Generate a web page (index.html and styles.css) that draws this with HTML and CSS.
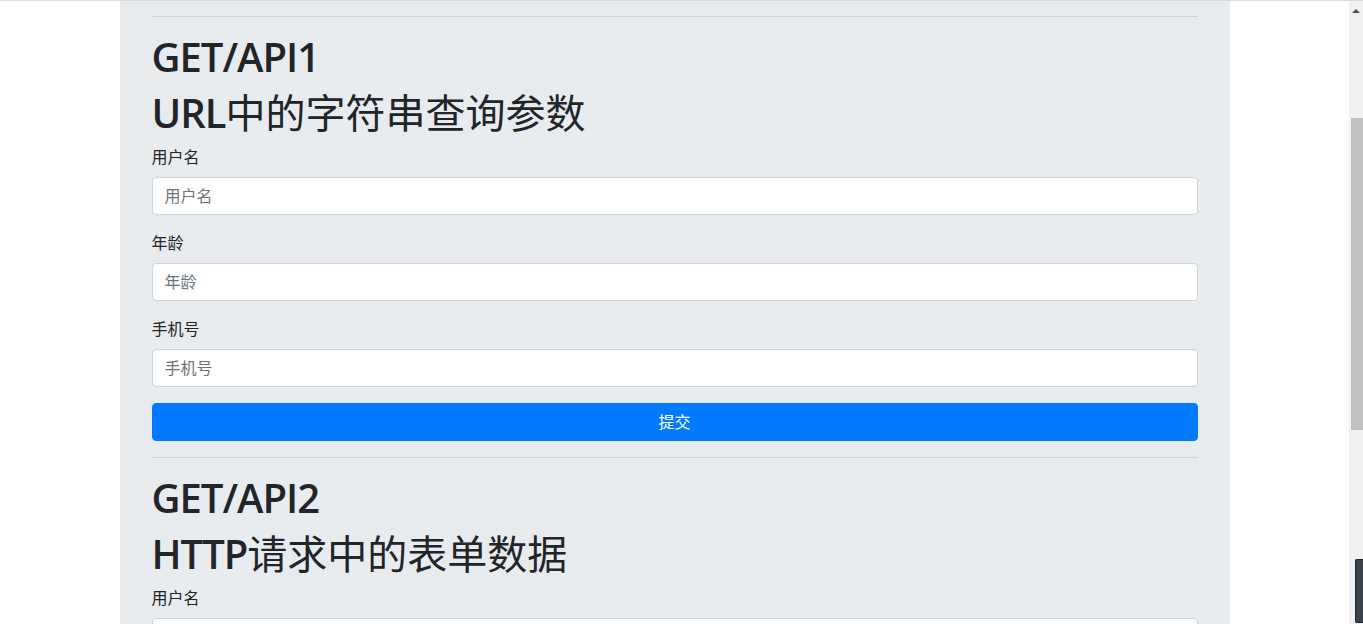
FILE: index.html
```html
<!DOCTYPE html>
<html>
<head>
    <meta charset="utf-8">
    <title>API 测试</title>
    <link rel="stylesheet" href="styles.css">
</head>
<body>
    <div class="page">
        <div class="jumbotron">
            <hr>
            <h1>GET/API1</h1>
            <h1>URL<span class="cn">中的字符串查询参数</span></h1>
            <form>
                <div class="form-group">
                    <label for="name1">用户名</label>
                    <input type="text" id="name1" class="form-control" placeholder="用户名">
                </div>
                <div class="form-group">
                    <label for="age1">年龄</label>
                    <input type="text" id="age1" class="form-control" placeholder="年龄">
                </div>
                <div class="form-group">
                    <label for="phone1">手机号</label>
                    <input type="text" id="phone1" class="form-control" placeholder="手机号">
                </div>
                <button type="button" class="btn">提交</button>
            </form>
            <hr>
            <h1>GET/API2</h1>
            <h1>HTTP<span class="cn">请求中的表单数据</span></h1>
            <form>
                <div class="form-group">
                    <label for="name2">用户名</label>
                    <input type="text" id="name2" class="form-control" placeholder="用户名">
                </div>
            </form>
        </div>
    </div>
    <div class="scrollbar">
        <div class="arrow"></div>
        <div class="thumb"></div>
        <div class="meter"></div>
    </div>
</body>
</html>
```

FILE: styles.css
```css
html, body {
    height: 100%;
}
body {
    margin: 0;
    display: flex;
    overflow: hidden;
    border-top: 1px solid #dadada;
    box-sizing: border-box;
    font-family: "Open Sans", "Noto Sans CJK SC", sans-serif;
    font-size: 16px;
    line-height: 1.5;
    color: #212529;
    background: #fff;
}
.page {
    flex: 1;
    min-width: 0;
}
.jumbotron {
    width: 1046px;
    margin: 0 auto;
    padding: 15px 32px 0;
    background-color: #e9ecef;
    min-height: 700px;
}
hr {
    margin: 0 0 16px;
    border: 0;
    border-top: 1px solid rgba(0, 0, 0, .1);
    height: 0;
}
form + hr {
    margin-top: 16px;
}
h1 {
    font-size: 40px;
    font-weight: 600;
    line-height: 48px;
    margin: 0 0 8px;
    letter-spacing: -1px;
}
h1 .cn {
    font-weight: 400;
    letter-spacing: 0;
}
.form-group {
    margin-bottom: 16px;
}
label {
    display: inline-block;
    margin-bottom: 8px;
    font-size: 16px;
    line-height: 24px;
}
.form-control {
    display: block;
    width: 100%;
    height: 38px;
    box-sizing: border-box;
    padding: 6px 12px;
    font-family: inherit;
    font-size: 16px;
    color: #495057;
    background: #fff;
    border: 1px solid #ced4da;
    border-radius: 4px;
    outline: none;
}
.form-control::placeholder {
    color: #6c757d;
}
.btn {
    display: block;
    width: 100%;
    height: 38px;
    padding: 6px 12px;
    font-family: inherit;
    font-size: 16px;
    line-height: 24px;
    color: #fff;
    background-color: #007bff;
    border: 1px solid #007bff;
    border-radius: 4px;
}
.scrollbar {
    width: 14px;
    background: #f1f1f1;
    display: flex;
    flex-direction: column;
    align-items: flex-end;
    position: relative;
}
.arrow {
    margin: 8px 3px 0 0;
    width: 0;
    height: 0;
    border-left: 4px solid transparent;
    border-right: 4px solid transparent;
    border-bottom: 4px solid #505050;
}
.thumb {
    margin-top: 105px;
    width: 12px;
    height: 312px;
    background: #c1c1c1;
}
.meter {
    position: absolute;
    right: 0;
    top: 558px;
    width: 7px;
    height: 62px;
    background: #3b4148;
    border: 1px solid #22262b;
    border-right: 0;
    border-radius: 2px 0 0 2px;
}
```
